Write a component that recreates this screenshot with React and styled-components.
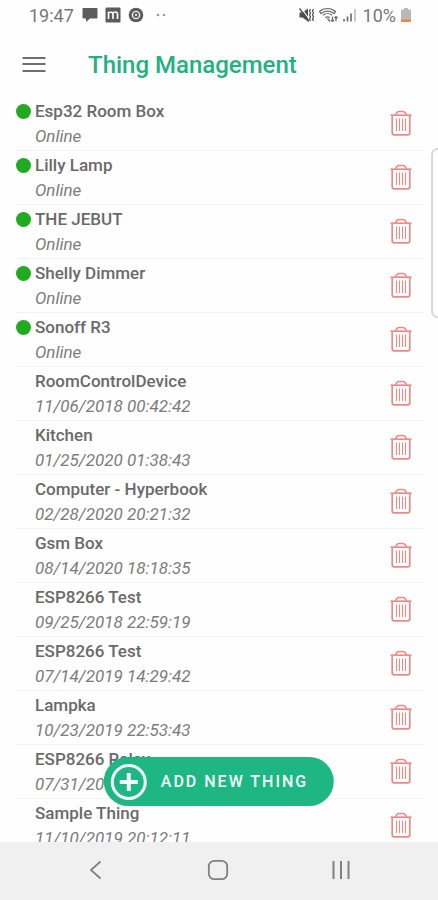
import React from 'react'
import styled, { createGlobalStyle } from 'styled-components'

const things = [
  { name: 'Esp32 Room Box', status: 'Online', online: true },
  { name: 'Lilly Lamp', status: 'Online', online: true },
  { name: 'THE JEBUT', status: 'Online', online: true },
  { name: 'Shelly Dimmer', status: 'Online', online: true },
  { name: 'Sonoff R3', status: 'Online', online: true },
  { name: 'RoomControlDevice', status: '11/06/2018 00:42:42' },
  { name: 'Kitchen', status: '01/25/2020 01:38:43' },
  { name: 'Computer - Hyperbook', status: '02/28/2020 20:21:32' },
  { name: 'Gsm Box', status: '08/14/2020 18:18:35' },
  { name: 'ESP8266 Test', status: '09/25/2018 22:59:19' },
  { name: 'ESP8266 Test', status: '07/14/2019 14:29:42' },
  { name: 'Lampka', status: '10/23/2019 22:53:43' },
  { name: 'ESP8266 Relay', status: '07/31/20' },
  { name: 'Sample Thing', status: '11/10/2019 20:12:11' },
]

const TrashIcon = () => (
  <svg width="22" height="26" viewBox="0 0 22 26" fill="none" stroke="#ec8a8a" strokeWidth="1.7">
    <path d="M0.5 5.2h21" />
    <path d="M5.5 5c0.8-2 2-3.5 3.5-3.5h4c1.5 0 2.700 1.5 3.5 3.5" />
    <path d="M2.2 5v17.8c0 1.2 0.8 2 2 2h13.6c1.2 0 2-0.8 2-2V5" />
    <path d="M6.5 8.5v12.5M9.5 8.5v12.5M12.5 8.5v12.5M15.5 8.5v12.5" strokeWidth="1.1" />
  </svg>
)

const StatusBar = () => (
  <Status>
    <StatusGroup>
      <Clock>19:47</Clock>
      <svg width="16" height="16" viewBox="0 0 16 16" fill="#5c5c5c">
        <path d="M1.5 1h13a1 1 0 0 1 1 1v8.5a1 1 0 0 1-1 1H8l-4 3.5v-3.5H1.5a1 1 0 0 1-1-1V2a1 1 0 0 1 1-1z" />
      </svg>
      <svg width="16" height="16" viewBox="0 0 16 16">
        <rect x="0.5" y="0.5" width="15" height="15" rx="1" fill="#5c5c5c" />
        <path d="M3.5 12V4.8M3.5 6.2c0-1 4.5-1.8 4.5 0.6V12M8 6.8c0-2.4 4.5-2.4 4.5 0V12" fill="none" stroke="#fff" strokeWidth="1.6" />
      </svg>
      <svg width="16" height="16" viewBox="0 0 16 16">
        <circle cx="8" cy="8" r="7.3" fill="#5c5c5c" />
        <circle cx="8" cy="8" r="3.6" fill="none" stroke="#eee" strokeWidth="1.4" />
        <circle cx="8" cy="8" r="1.2" fill="#ddd" />
      </svg>
      <svg width="16" height="16" viewBox="0 0 16 16" fill="#9a9a9a">
        <circle cx="7" cy="8" r="1.3" />
        <circle cx="13" cy="8" r="1.3" />
      </svg>
    </StatusGroup>
    <StatusGroup $tight>
      <svg width="16" height="16" viewBox="0 0 16 16">
        <path d="M0.5 5.5h3L9 1.5v13L3.5 10.5h-3z" fill="#4d4d4d" />
        <path d="M2 1l9 12" stroke="#fff" strokeWidth="1.2" />
        <path d="M0.5 1.5l9.5 13" stroke="#4d4d4d" strokeWidth="1.3" />
        <path d="M11.5 2l-1 2 1 2-1 2 1 2-1 2 1 2M14.5 2l-1 2 1 2-1 2 1 2-1 2 1 2" fill="none" stroke="#4d4d4d" strokeWidth="1.2" />
      </svg>
      <svg width="20" height="16" viewBox="0 0 20 16" fill="none" stroke="#6a6a6a" strokeWidth="1.2">
        <path d="M0.5 4.5c4.5-4 11.5-4 16 0l-1.5 2c-3.8-3.3-9.2-3.3-13 0z" />
        <path d="M4 8.2c2.6-2.3 6.4-2.3 9 0M6.3 10.8c1.3-1.2 3.2-1.2 4.5 0" />
        <path d="M8.5 11.5l2.5 3M13.5 9.5v5M12 13l1.5 1.5L15 13M17 14.5v-5M15.5 11L17 9.5 18.5 11" />
      </svg>
      <svg width="14" height="16" viewBox="0 0 14 16" strokeWidth="1.6">
        <path d="M1 12v2.5M4.5 9.5v5M8 6.5v8" stroke="#666" />
        <path d="M12 2v12.5" stroke="#bdbdbd" />
      </svg>
      <Battery>10%</Battery>
      <svg width="12" height="16" viewBox="0 0 12 16">
        <path d="M4 1h4v1.5h2a1 1 0 0 1 1 1V13H1V3.5a1 1 0 0 1 1-1h2z" fill="#b9b9b9" />
        <path d="M1 12.5h10V14a1 1 0 0 1-1 1H2a1 1 0 0 1-1-1z" fill="#f0824f" />
      </svg>
    </StatusGroup>
  </Status>
)

const App = () => {
  return (
    <Screen>
      <GlobalStyle />
      <StatusBar />
      <Header>
        <IconButton aria-label="Menu">
          <svg width="24" height="18" viewBox="0 0 24 18" stroke="#6e6e6e" strokeWidth="2">
            <path d="M0.5 2h23M0.5 8h23M0.5 15h23" />
          </svg>
        </IconButton>
        <Title>Thing Management</Title>
      </Header>
      <Content>
        <ThingList>
          {things.map((thing, i) => (
            <ThingRow key={i}>
              <Dot $online={thing.online} />
              <Info>
                <Name>{thing.name}</Name>
                <LastSeen>{thing.status}</LastSeen>
              </Info>
              <IconButton aria-label={`Delete ${thing.name}`}>
                <TrashIcon />
              </IconButton>
            </ThingRow>
          ))}
        </ThingList>
        <AddButton>
          <svg width="38" height="38" viewBox="0 0 38 38" fill="none" stroke="#f2fffa">
            <circle cx="19" cy="19" r="16.5" strokeWidth="3" />
            <path d="M19 10v18M10 19h18" strokeWidth="4" />
          </svg>
          ADD NEW THING
        </AddButton>
      </Content>
      <EdgeHandle />
      <NavBar>
        <IconButton aria-label="Back">
          <svg width="24" height="24" viewBox="0 0 24 24" fill="none" stroke="#808080" strokeWidth="1.8">
            <path d="M17.5 3.5L8 12l9.5 8.5" />
          </svg>
        </IconButton>
        <IconButton aria-label="Home">
          <svg width="24" height="24" viewBox="0 0 24 24" fill="none" stroke="#808080" strokeWidth="1.8">
            <rect x="2.8" y="2.8" width="18.4" height="18.4" rx="5.5" />
          </svg>
        </IconButton>
        <IconButton aria-label="Recent apps">
          <svg width="24" height="24" viewBox="0 0 24 24" stroke="#808080" strokeWidth="2">
            <path d="M4.5 3v18M12 3v18M19.5 3v18" />
          </svg>
        </IconButton>
      </NavBar>
    </Screen>
  )
}

const GlobalStyle = createGlobalStyle`
  * {
    box-sizing:border-box;
  }
  body {
    margin:0;
    background:#fefefe;
    font-family:Roboto, sans-serif;
    color:#6a6a6a;
  }
`;

const Screen = styled.div`
  position:relative;
  display:flex;
  flex-direction:column;
  height:100vh;
  overflow:hidden;
`;

const Status = styled.div`
  display:flex;
  justify-content:space-between;
  align-items:center;
  height:30px;
  padding:0 26px 0 29px;
`;

const StatusGroup = styled.div`
  display:flex;
  align-items:center;
  gap:${props => props.$tight ? '4px' : '7px'};
`;

const Clock = styled.span`
  margin-right:1px;
  font-size:18px;
  color:#777;
`;

const Battery = styled.span`
  margin-left:2px;
  font-size:18px;
  color:#777;
`;

const Header = styled.header`
  display:flex;
  align-items:center;
  gap:42px;
  height:67px;
  padding:2px 22px 0;
`;

const IconButton = styled.button`
  display:flex;
  align-items:center;
  justify-content:center;
  padding:0;
  border:none;
  background:none;
`;

const Title = styled.h1`
  margin:0;
  font-size:24px;
  font-weight:500;
  color:#22b17f;
`;

const Content = styled.main`
  position:relative;
  flex:1;
  min-height:0;
  overflow:hidden;
`;

const ThingList = styled.ul`
  margin:0;
  padding:0 14px 0 16px;
  list-style:none;
`;

const ThingRow = styled.li`
  display:flex;
  height:54px;
  padding:0 12px 2px 0;
  border-bottom:1px solid #f3f3f3;
`;

const Dot = styled.span`
  width:15px;
  height:15px;
  margin:7px 4px 0 0;
  border-radius:50%;
  background:${props => props.$online ? '#1faa1f' : 'transparent'};
`;

const Info = styled.div`
  flex:1;
`;

const Name = styled.div`
  padding-top:2px;
  font-size:17px;
  line-height:24px;
  font-weight:500;
`;

const LastSeen = styled.div`
  font-size:17px;
  line-height:26px;
  font-style:italic;
  font-weight:400;
  color:#7c7c7c;
`;

const AddButton = styled.button`
  position:absolute;
  left:50%;
  bottom:36px;
  transform:translateX(-50%);
  display:flex;
  align-items:center;
  gap:13px;
  height:49px;
  padding:0 26px 0 6px;
  border:none;
  border-radius:25px;
  background:#1eb784;
  color:#f2fffa;
  font-family:inherit;
  font-size:16px;
  font-weight:500;
  letter-spacing:2px;
  white-space:nowrap;
`;

/* edge panel grip, half off the right side */
const EdgeHandle = styled.div`
  position:absolute;
  top:148px;
  right:-6px;
  width:13px;
  height:170px;
  border:2px solid #d8d8d8;
  border-radius:8px;
  background:#fefefe;
`;

const NavBar = styled.nav`
  display:flex;
  justify-content:space-between;
  align-items:center;
  height:58px;
  padding:0 85px 2px 83px;
  background:#f0f0f0;
`;

export default App
